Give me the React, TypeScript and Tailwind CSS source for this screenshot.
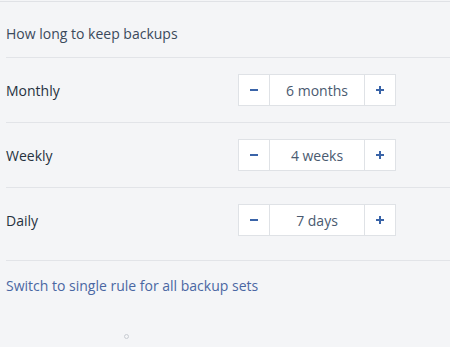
import React from 'react';

const rules = [
  { label: 'Monthly', value: '6 months' },
  { label: 'Weekly', value: '4 weeks' },
  { label: 'Daily', value: '7 days' },
];

function Stepper({ value }: { value: string }) {
  return (
    <div className="flex h-8 border border-[#dfe2e6] bg-white">
      <button className="flex w-[30px] items-center justify-center">
        <span className="block h-[2px] w-2 bg-[#3a64a8]" />
      </button>
      <div className="flex w-[96px] items-center justify-center border-x border-[#dfe2e6] text-[14px] text-[#4a5a70]">
        {value}
      </div>
      <button className="relative flex w-[30px] items-center justify-center">
        <span className="block h-[2px] w-2 bg-[#3a64a8]" />
        <span className="absolute h-2 w-[2px] bg-[#3a64a8]" />
      </button>
    </div>
  );
}

export default function App() {
  return (
    <div
      className="h-[347px] w-[450px] overflow-hidden bg-[#f4f5f7] pt-px"
      style={{ fontFamily: '"Open Sans", "Noto Sans", sans-serif' }}
    >
      <div className="border-t border-[#e0e2e6]" />
      <div className="ml-[6px]">
        <div className="border-b border-[#e2e4e8] pt-[22px] pb-[13px] text-[14px] leading-5 text-[#3b4a5c]">
          How long to keep backups
        </div>
        {rules.map((r, i) => (
          <div
            key={r.label}
            className={
              i === rules.length - 1
                ? 'flex h-[73px] items-center border-b border-[#e2e4e8] pb-2'
                : 'flex h-[65px] items-center border-b border-[#e2e4e8]'
            }
          >
            <div className="w-[232px] text-[14px] text-[#26323f]">{r.label}</div>
            <Stepper value={r.value} />
          </div>
        ))}
        <div className="pt-[15px] text-[14px] leading-5 text-[#4a67a3]">
          Switch to single rule for all backup sets
        </div>
        <div className="ml-[118px] mt-[38px] h-[5px] w-[5px] rounded-full border border-[#c8ccd2]" />
      </div>
    </div>
  );
}
